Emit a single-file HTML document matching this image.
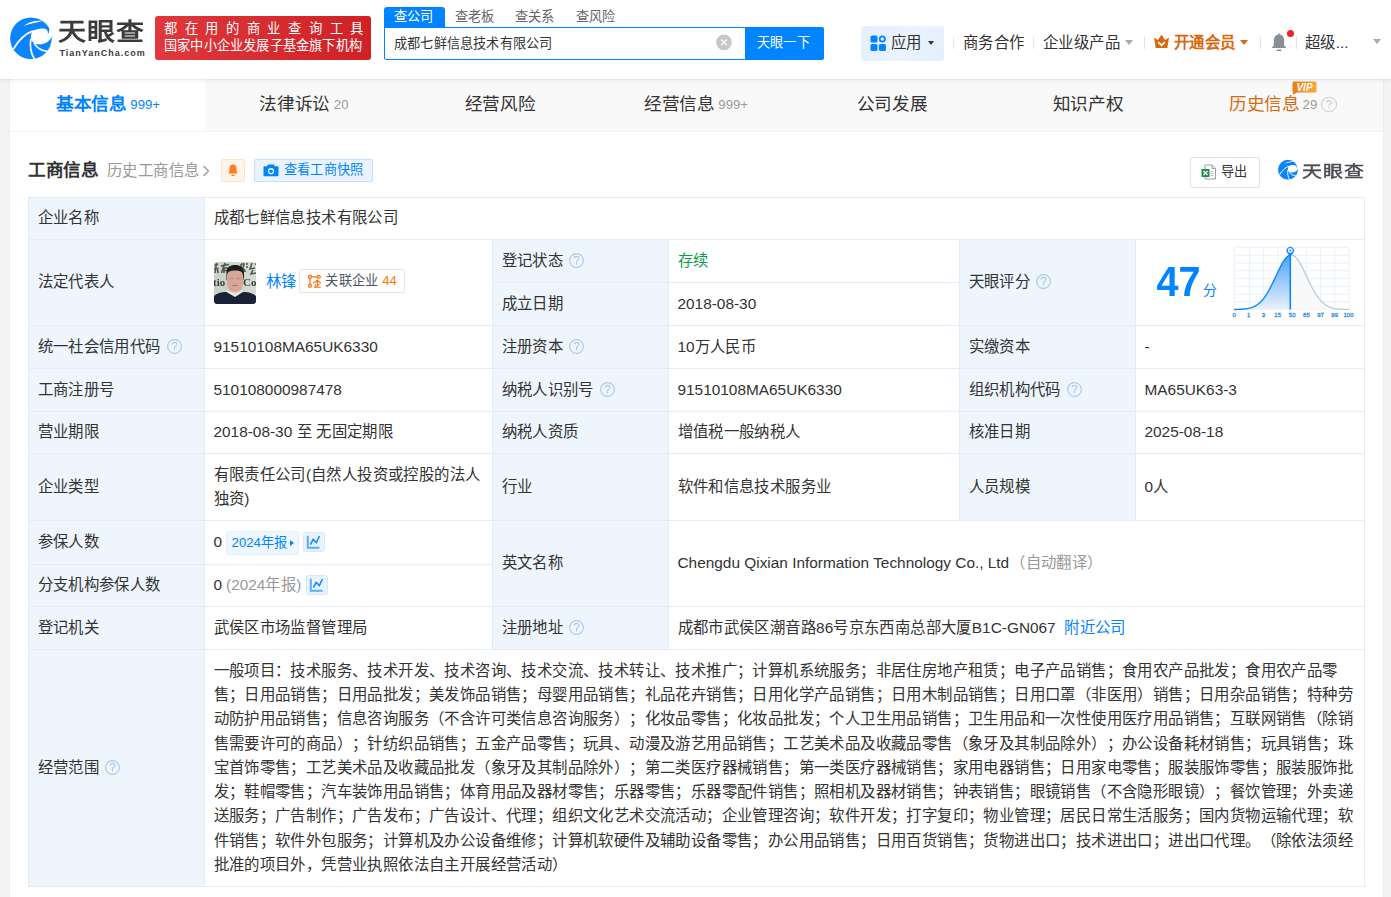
<!DOCTYPE html>
<html lang="zh-CN"><head><meta charset="utf-8">
<style>
*{box-sizing:border-box;margin:0;padding:0}
html,body{text-spacing-trim:space-all;width:1391px;height:897px;overflow:hidden;background:#f4f4f4;font-family:"Liberation Sans",sans-serif;color:#333}
.a{position:absolute}
#hdr{left:0;top:0;width:1391px;height:79px;background:#fff;box-shadow:0 1px 1px rgba(0,0,0,.04),0 2px 5px rgba(0,0,0,.05);z-index:2}
#card{left:10px;top:79px;width:1373px;height:830px;background:#fff;box-shadow:-1px 0 1px rgba(0,0,0,.03),1px 0 1px rgba(0,0,0,.03)}
#tabs{left:0;top:0;width:1373px;height:53px;background:#f9f9f9;border-bottom:1px solid #f3f3f3}
.tab{position:absolute;top:0;height:52px;width:196px;text-align:center;font-size:17.6px;line-height:50px;color:#333;white-space:nowrap}
.tab .n{font-size:13.2px;color:#999;margin-left:4px;vertical-align:1.5px}
.c{position:absolute;background:#fff;font-size:15.4px;line-height:24.2px;color:#333;white-space:nowrap;display:flex;align-items:center;padding:0 8.5px}
.l{background:#eef5fd}
.bd{position:absolute;background:#e3ecf6}
.q{display:inline-block;width:15px;height:15px;margin-left:6px;vertical-align:-2px}
.lk{color:#0084ff}
.q2{display:inline-block;width:15.5px;height:15.5px;border:1.4px solid #c3c8cf;border-radius:50%;color:#c3c8cf;font-size:11px;line-height:13px;text-align:center;vertical-align:2.5px;margin-left:4px;font-weight:normal}
.rel{display:inline-flex;align-items:center;height:23.5px;transform:translateY(1px);border:1px solid #e1e6ec;border-radius:2px;padding:0 7px 0 8px;margin-left:3px;font-size:13.2px;color:#4d5866}
.rel b{font-weight:normal;color:#ff7a00;margin-left:4px}
.relic{display:inline-block;width:13px;height:13px;margin-right:4px}
.nb{display:inline-flex;align-items:center;height:23.5px;background:#eef6ff;border:1px solid #e2eefb;border-radius:2px;padding:0 4.5px 0 5px;margin-left:3.5px;font-size:13.2px;color:#0084ff;vertical-align:middle}
.tri{display:inline-block;width:0;height:0;border-top:3px solid transparent;border-bottom:3px solid transparent;border-left:4px solid #0084ff;margin-left:2.5px}
.chi{display:inline-block;width:22px;height:20px;margin-left:4.5px;position:relative;vertical-align:middle}
.in{display:block}
#rb1 z{letter-spacing:7.7px}
#lg1 z{letter-spacing:1.4px}
#lg3 z{letter-spacing:1px}
.scope{white-space:normal;line-height:24.2px;width:1145px}
z{letter-spacing:calc(1em - round(nearest, 1em, 1px))}
</style></head><body>
<div id="hdr" class="a">
  <svg class="a" style="left:8px;top:16px" width="46" height="46" viewBox="0 0 897 897">
    <circle cx="447" cy="435" r="405" fill="#0b84fd"/>
    <path d="M480 290 C560 245 690 225 750 265 C785 295 785 340 768 375 C795 340 808 300 808 240 L900 240 L900 400 L852 400 C810 520 660 585 520 535 C480 510 450 480 445 455 C440 390 455 330 480 290 Z" fill="#fff"/>
    
    <path d="M305 192 C400 115 550 78 672 98 C550 128 420 158 305 192 Z" fill="#fff"/>
    <path d="M105 645 C200 480 330 350 485 290" stroke="#fff" stroke-width="32" fill="none"/>
    <path d="M445 450 C420 600 450 730 515 840" stroke="#fff" stroke-width="32" fill="none"/>
    <path d="M505 525 C560 620 650 680 770 690" stroke="#fff" stroke-width="32" fill="none"/>
  </svg>
  <div class="a" id="lg1" style="left:57.5px;top:17.5px;font-size:28px;line-height:34px;font-weight:bold;color:#3c3a3a;letter-spacing:1.5px;transform:scaleY(0.84);transform-origin:0 0"><z>天眼查</z></div>
  <div class="a" id="lg2" style="left:59.5px;top:47px;font-size:9px;line-height:12px;font-weight:bold;color:#3c3a3a;letter-spacing:1px">TianYanCha.com</div>
  <div class="a" style="left:155px;top:16px;width:216px;height:44px;border-radius:3px;background:linear-gradient(90deg,#e0383c,#cf2126)"></div>
  <div class="a" id="rb1" style="left:164px;top:19.5px;font-size:13.3px;line-height:18px;color:#fff;letter-spacing:7.7px"><z>都在用的商业查询工具</z></div>
  <div class="a" id="rb2" style="left:164px;top:37px;font-size:13.2px;line-height:18px;color:#fff"><z>国家中小企业发展子基金旗下机构</z></div>
  <!-- search tabs -->
  <div class="a" style="left:384px;top:7px;width:61px;height:21px;background:#0084ff;border-radius:3px 3px 0 0"></div>
  <div class="a" style="left:394px;top:7px;font-size:13.2px;line-height:20px;color:#fff"><z>查公司</z></div>
  <div class="a" style="left:455px;top:7px;font-size:13.2px;line-height:20px;color:#666"><z>查老板</z></div>
  <div class="a" style="left:515px;top:7px;font-size:13.2px;line-height:20px;color:#666"><z>查关系</z></div>
  <div class="a" style="left:576px;top:7px;font-size:13.2px;line-height:20px;color:#666"><z>查风险</z></div>
  <div class="a" style="left:384px;top:27px;width:440px;height:33px;border:1.25px solid #0084ff;border-radius:0 2px 2px 2px"></div>
  <div class="a" style="left:394px;top:34px;font-size:13.2px;line-height:20px;color:#333"><z>成都七鲜信息技术有限公司</z></div>
  <svg class="a" style="left:715px;top:34px" width="18" height="17" viewBox="0 0 18 17">
    <circle cx="9" cy="8.3" r="7.9" fill="#c8c8c8"/>
    <path d="M6.2 5.5 L11.8 11.1 M11.8 5.5 L6.2 11.1" stroke="#fff" stroke-width="1.3"/>
  </svg>
  <div class="a" style="left:745px;top:27px;width:79px;height:33px;background:#0084ff;border-radius:0 3px 3px 0"></div>
  <div class="a" style="left:757px;top:33px;font-size:13.2px;line-height:20px;color:#fff"><z>天眼一下</z></div>
  <!-- right nav -->
  <div class="a" style="left:861px;top:26px;width:83px;height:35px;background:linear-gradient(120deg,#e5f0fd,#eaf3fe 60%,#e3eefc);border-radius:3px"></div>
  <svg class="a" style="left:870px;top:35px" width="17" height="17" viewBox="0 0 17 17">
    <rect x="0.5" y="0.5" width="7" height="7" rx="1.6" fill="#0084ff"/>
    <circle cx="12.3" cy="4" r="2.6" fill="none" stroke="#0084ff" stroke-width="1.8"/>
    <rect x="0.5" y="9" width="7" height="7" rx="1.6" fill="#0084ff"/>
    <rect x="8.9" y="9" width="7" height="7" rx="1.6" fill="#0084ff"/>
  </svg>
  <div class="a" style="left:891px;top:31px;font-size:15.4px;line-height:24px;color:#333"><z>应用</z></div>
  <div class="a" style="left:927.5px;top:40.5px;width:0;height:0;border-left:3.5px solid transparent;border-right:3.5px solid transparent;border-top:4.5px solid #333"></div>
  <div class="a" style="left:953px;top:37px;width:1px;height:12px;background:#e3e3e3"></div>
  <div class="a" style="left:963px;top:31px;font-size:15.4px;line-height:24px;color:#333"><z>商务合作</z></div>
  <div class="a" style="left:1033px;top:37px;width:1px;height:12px;background:#e3e3e3"></div>
  <div class="a" style="left:1043px;top:31px;font-size:15.4px;line-height:24px;color:#333"><z>企业级产品</z></div>
  <div class="a" style="left:1125px;top:40px;width:0;height:0;border-left:4px solid transparent;border-right:4px solid transparent;border-top:5px solid #aaa"></div>
  <div class="a" style="left:1144px;top:37px;width:1px;height:12px;background:#e3e3e3"></div>
  <svg class="a" style="left:1153px;top:34px" width="17" height="15" viewBox="0 0 17 15">
    <path d="M1 3.5 L4.8 6 L8.5 0.8 L12.2 6 L16 3.5 L14.3 14 L2.7 14 Z" fill="#d9690f"/>
    <path d="M5.2 8.2 L8.5 11.3 L11.8 8.2" stroke="#fff" stroke-width="1.8" fill="none"/>
  </svg>
  <div class="a" style="left:1174px;top:31px;font-size:15.4px;line-height:24px;color:#d9690f;font-weight:bold"><z>开通会员</z></div>
  <div class="a" style="left:1240px;top:40px;width:0;height:0;border-left:4px solid transparent;border-right:4px solid transparent;border-top:5px solid #d9690f"></div>
  <div class="a" style="left:1260px;top:37px;width:1px;height:12px;background:#e3e3e3"></div>
  <svg class="a" style="left:1270px;top:33px" width="18" height="19" viewBox="0 0 18 19">
    <path d="M9 1.5 C5 1.5 3.8 5 3.8 8 L3.8 12.5 L1.5 15 L16.5 15 L14.2 12.5 L14.2 8 C14.2 5 13 1.5 9 1.5 Z" fill="#8a8e95"/>
    <rect x="6.5" y="16.6" width="5" height="1.4" rx="0.7" fill="#8a8e95"/><rect x="8.2" y="0.3" width="1.6" height="2" rx="0.8" fill="#8a8e95"/>
  </svg>
  <div class="a" style="left:1287px;top:30px;width:7px;height:7px;border-radius:50%;background:#f5222d"></div>
  <div class="a" style="left:1296px;top:37px;width:1px;height:12px;background:#e3e3e3"></div>
  <div class="a" style="left:1305px;top:31px;font-size:15.4px;line-height:24px;color:#333"><z>超级</z>...</div>
  <div class="a" style="left:1373px;top:39px;width:0;height:0;border-left:4px solid transparent;border-right:4px solid transparent;border-top:5px solid #aaa"></div>
</div>
<div id="card" class="a">
  <div id="tabs" class="a">
    <div class="a" style="left:0;top:0;width:195px;height:52px;background:#fff"></div>
    <div class="tab" style="left:0;color:#0084ff;font-weight:bold"><z>基本信息</z><span class="n" style="color:#0084ff;font-weight:normal">999+</span></div>
    <div class="tab" style="left:196px"><z>法律诉讼</z><span class="n">20</span></div>
    <div class="tab" style="left:392px"><z>经营风险</z></div>
    <div class="tab" style="left:588px"><z>经营信息</z><span class="n">999+</span></div>
    <div class="tab" style="left:784px"><z>公司发展</z></div>
    <div class="tab" style="left:980px"><z>知识产权</z></div>
    <div class="tab" style="left:1175px;color:#d9690f"><z>历史信息</z><span class="n" style="margin-left:3px">29</span><span class="q2">?</span></div>
  </div>
  <svg class="a" style="left:1282px;top:2px" width="25" height="14" viewBox="0 0 25 14">
    <defs><linearGradient id="vg" x1="0" y1="0" x2="1" y2="0"><stop offset="0" stop-color="#ee7f12"/><stop offset="1" stop-color="#fca83a"/></linearGradient></defs>
    <path d="M2 0.5 L23 0.5 Q24.5 0.5 24.5 2 L24.5 10 Q24.5 11.5 23 11.5 L5 11.5 L1 13.8 L1 11 Q0.5 10.5 0.5 10 L0.5 2 Q0.5 0.5 2 0.5 Z" fill="url(#vg)"/>
    <text x="12.5" y="9.6" text-anchor="middle" font-family="Liberation Sans" font-size="10" font-weight="bold" font-style="italic" fill="#fff">VIP</text>
  </svg>
  <!-- section header -->
  <div class="a" id="sh1" style="left:18px;top:79px;font-size:17.6px;line-height:24px;font-weight:bold;color:#333"><z>工商信息</z></div>
  <div class="a" id="sh2" style="left:97px;top:81px;font-size:15.4px;line-height:22px;color:#999"><z>历史工商信息</z></div>
  <svg class="a" style="left:191px;top:85px" width="10" height="14" viewBox="0 0 10 14"><path d="M2.5 2 L7.5 7 L2.5 12" stroke="#999" stroke-width="1.3" fill="none"/></svg>
  <div class="a" style="left:211px;top:79.5px;width:24px;height:23px;background:#fff4ea;border:1px solid #fde3cc;border-radius:2px"></div>
  <svg class="a" style="left:216px;top:84px" width="14" height="14" viewBox="0 0 14 14">
    <path d="M7 1.5 C4.3 1.5 3.4 3.8 3.4 6 L3.4 9 L2 10.6 L12 10.6 L10.6 9 L10.6 6 C10.6 3.8 9.7 1.5 7 1.5 Z" fill="#ff7e1f"/>
    <rect x="5.4" y="11.4" width="3.2" height="1.5" rx="0.7" fill="#ff7e1f"/>
  </svg>
  <div class="a" style="left:244px;top:79.5px;width:119px;height:23px;background:#ebf4fe;border:1px solid #c8dff8;border-radius:2px"></div>
  <svg class="a" style="left:253px;top:84px" width="16" height="14" viewBox="0 0 16 14">
    <path d="M5.2 1.5 L10.8 1.5 L12 3.3 L14.2 3.3 C15 3.3 15.5 3.8 15.5 4.6 L15.5 12 C15.5 12.8 15 13.3 14.2 13.3 L1.8 13.3 C1 13.3 0.5 12.8 0.5 12 L0.5 4.6 C0.5 3.8 1 3.3 1.8 3.3 L4 3.3 Z" fill="#0084ff"/>
    <circle cx="8" cy="8.2" r="3.1" fill="#ebf4fe"/><circle cx="8" cy="8.2" r="1.8" fill="#0084ff"/>
  </svg>
  <div class="a" id="sh3" style="left:274px;top:81px;font-size:13.2px;line-height:20px;color:#0084ff"><z>查看工商快照</z></div>
  <!-- export -->
  <div class="a" style="left:1179.5px;top:78px;width:70px;height:30.5px;background:#fff;border:1px solid #e3e3e3;border-radius:2px"></div>
  <svg class="a" style="left:1191px;top:85px" width="16" height="16" viewBox="0 0 16 16">
    <path d="M4 1 L11 1 L14.5 4.5 L14.5 15 L4 15 Z" fill="#fff" stroke="#9aa0a6" stroke-width="1"/>
    <path d="M11 1 L11 4.5 L14.5 4.5" fill="none" stroke="#9aa0a6" stroke-width="1"/>
    <rect x="9.5" y="7" width="3" height="1" fill="#b8bcc2"/><rect x="9.5" y="9" width="3" height="1" fill="#b8bcc2"/><rect x="9.5" y="11" width="3" height="1" fill="#b8bcc2"/>
    <rect x="0.5" y="5" width="8" height="8" fill="#1d8f4a"/>
    <path d="M2.5 7 L6.5 11 M6.5 7 L2.5 11" stroke="#fff" stroke-width="1.2"/>
  </svg>
  <div class="a" id="sh4" style="left:1211px;top:82.5px;font-size:13.2px;line-height:20px;color:#333"><z>导出</z></div>
  <svg class="a" id="lgs" style="left:1267px;top:80px" width="22" height="22" viewBox="0 0 897 897">
    <circle cx="447" cy="435" r="405" fill="#0b84fd"/>
    <path d="M480 290 C560 245 690 225 750 265 C785 295 785 340 768 375 C795 340 808 300 808 240 L900 240 L900 400 L852 400 C810 520 660 585 520 535 C480 510 450 480 445 455 C440 390 455 330 480 290 Z" fill="#fff"/>
    
    <path d="M305 192 C400 115 550 78 672 98 C550 128 420 158 305 192 Z" fill="#fff"/>
    <path d="M105 645 C200 480 330 350 485 290" stroke="#fff" stroke-width="40" fill="none"/>
    <path d="M445 450 C420 600 450 730 515 840" stroke="#fff" stroke-width="40" fill="none"/>
    <path d="M505 525 C560 620 650 680 770 690" stroke="#fff" stroke-width="40" fill="none"/>
  </svg>
  <div class="a" id="lg3" style="left:1292px;top:82.5px;font-size:20px;line-height:24px;font-weight:normal;-webkit-text-stroke:0.6px #4b4b52;color:#4b4b52;letter-spacing:1px;transform:scaleY(0.78);transform-origin:0 0"><z>天眼查</z></div>
</div>
<div id="tbl">
<div class="bd" style="left:28px;top:197px;width:1337px;height:1px"></div>
<div class="bd" style="left:28px;top:239px;width:1337px;height:1px"></div>
<div class="bd" style="left:28px;top:282px;width:1337px;height:1px"></div>
<div class="bd" style="left:28px;top:325px;width:1337px;height:1px"></div>
<div class="bd" style="left:28px;top:368px;width:1337px;height:1px"></div>
<div class="bd" style="left:28px;top:411px;width:1337px;height:1px"></div>
<div class="bd" style="left:28px;top:453px;width:1337px;height:1px"></div>
<div class="bd" style="left:28px;top:520px;width:1337px;height:1px"></div>
<div class="bd" style="left:28px;top:564px;width:1337px;height:1px"></div>
<div class="bd" style="left:28px;top:606px;width:1337px;height:1px"></div>
<div class="bd" style="left:28px;top:649px;width:1337px;height:1px"></div>
<div class="bd" style="left:28px;top:886px;width:1337px;height:1px"></div>
<div class="bd" style="left:28px;top:197px;width:1px;height:690px"></div>
<div class="bd" style="left:1364px;top:197px;width:1px;height:690px"></div>
<div class="bd" style="left:204px;top:197px;width:1px;height:689px"></div>
<div class="bd" style="left:492px;top:239px;width:1px;height:647px"></div>
<div class="bd" style="left:668px;top:239px;width:1px;height:647px"></div>
<div class="bd" style="left:959px;top:239px;width:1px;height:281px"></div>
<div class="bd" style="left:1135px;top:239px;width:1px;height:281px"></div>
<div class="c l" style="left:29px;top:198px;width:175px;height:41px;"><span class="in"><z>企业名称</z></span></div>
<div class="c v" style="left:205px;top:198px;width:1159px;height:41px;"><span class="in"><z>成都七鲜信息技术有限公司</z></span></div>
<div class="c l" style="left:29px;top:240px;width:175px;height:85px;"><span class="in"><z>法定代表人</z></span></div>
<div class="c v" style="left:205px;top:240px;width:287px;height:85px;"><span class="in"><span id="photo" style="display:inline-block;vertical-align:middle;width:42px;height:42px"><svg width="42" height="42" viewBox="0 0 42 42" style="display:block"><defs><filter id="pbl" x="0" y="0" width="1" height="1"><feGaussianBlur stdDeviation="0.35"/></filter><clipPath id="pc"><rect width="42" height="42" rx="3"/></clipPath><linearGradient id="pg" x1="0" y1="0" x2="1" y2="0"><stop offset="0" stop-color="#c9d1c7"/><stop offset="1" stop-color="#d3ddd3"/></linearGradient></defs><g clip-path="url(#pc)"><g filter="url(#pbl)"><rect width="42" height="42" fill="url(#pg)"/><g stroke="#3f423f" stroke-width="1.6" fill="none" opacity="0.85"><path d="M0.5 3 L4 2.5 M2.5 1 L1 11 M0 7 L4.5 6.5 M3.5 7 L4 11"/><path d="M7 4 L15 2.5 M11 1 L7.5 11 M10 6 L14 6 L14 11 M10 6 L10 11 M10 8.5 L14 8.5"/><path d="M27 2 L27 12 M27 2 L30 2 L29 6 L31 9 L28 10 M32 2 L34 2 M32 5 L34 5"/><path d="M38 1 L36 7 L41 6 M39 8 L37 12 L42 11 M41 1 L42 3"/></g><text x="-1" y="24" font-family="Liberation Serif" font-size="11" font-weight="bold" fill="#3a3d3a">tio</text><text x="29" y="24" font-family="Liberation Serif" font-size="11" font-weight="bold" fill="#3a3d3a">Co</text><path d="M12.5 13 C12 5 16 3 21 3 C26 3 30.5 5 30 13 L29.5 18 L12.5 18 Z" fill="#1b1a1c"/><path d="M13 14 C13 9 17 8.5 21 8.5 C25.5 8.5 29 9 29 14 L29 22 C29 27 25.5 30 21 30 C16.5 30 13 27 13 22 Z" fill="#d9a797"/><ellipse cx="17.3" cy="16.6" rx="2.8" ry="1" fill="#a8948c" opacity="0.7"/><ellipse cx="24.7" cy="16.6" rx="2.8" ry="1" fill="#a8948c" opacity="0.7"/><path d="M18.5 23.5 L23.5 23.5" stroke="#b0736a" stroke-width="1.1"/><path d="M12 28 L21 32 L29 28 L29 33 L21 35 L12 33 Z" fill="#ede9e1"/><path d="M0 34 C3 31 9 29.5 12.5 30 L21 35 L29 30 C33 29.5 39 31 42 34 L42 42 L0 42 Z" fill="#1e2235"/></g></g></svg></span><span class="lk" style="margin-left:10px"><z>林锋</z></span><span class="rel"><i class="relic"><svg width="13" height="13" viewBox="0 0 13 13" style="display:block"><g fill="none" stroke="#ff6a00" stroke-width="1.15"><rect x="0.6" y="0.6" width="2.6" height="2.6" rx="0.5"/><rect x="9.5" y="0.6" width="2.6" height="2.6" rx="0.5"/><rect x="0.6" y="9.5" width="2.6" height="2.6" rx="0.5"/><path d="M3.2 1.9 L9.5 1.9 M1.9 3.2 L1.9 9.5"/><path d="M5.2 8.3 L9.3 5.3 L12.9 8.3 M9.3 6.3 L9.3 12.2 M7.2 9.2 L7.2 12.2 M9.3 9.6 L11.3 9.6 M5.8 12.2 L12.8 12.2"/></g></svg></i><z>关联企业</z> <b>44</b></span></span></div>
<div class="c l" style="left:493px;top:240px;width:175px;height:42px;"><span class="in"><z>登记状态</z><svg class="q" width="15" height="15" viewBox="0 0 15 15"><circle cx="7.5" cy="7.5" r="6.9" fill="none" stroke="#aecbea" stroke-width="1.2"/><path d="M5.2 5.6 C5.2 4.1 6.2 3.4 7.5 3.4 C8.9 3.4 9.9 4.2 9.9 5.5 C9.9 6.9 8.5 7.3 7.9 7.9 C7.6 8.2 7.5 8.6 7.5 9.2 L7.5 11.6" fill="none" stroke="#aecbea" stroke-width="1.1"/></svg></span></div>
<div class="c v" style="left:669px;top:240px;width:290px;height:42px;"><span class="in"><span style="color:#0e9b48"><z>存续</z></span></span></div>
<div class="c l" style="left:493px;top:283px;width:175px;height:42px;"><span class="in"><z>成立日期</z></span></div>
<div class="c v" style="left:669px;top:283px;width:290px;height:42px;"><span class="in">2018-08-30</span></div>
<div class="c l" style="left:960px;top:240px;width:175px;height:85px;"><span class="in"><z>天眼评分</z><svg class="q" width="15" height="15" viewBox="0 0 15 15"><circle cx="7.5" cy="7.5" r="6.9" fill="none" stroke="#aecbea" stroke-width="1.2"/><path d="M5.2 5.6 C5.2 4.1 6.2 3.4 7.5 3.4 C8.9 3.4 9.9 4.2 9.9 5.5 C9.9 6.9 8.5 7.3 7.9 7.9 C7.6 8.2 7.5 8.6 7.5 9.2 L7.5 11.6" fill="none" stroke="#aecbea" stroke-width="1.1"/></svg></span></div>
<div class="c v" style="left:1136px;top:240px;width:228px;height:85px;"><span class="in"><span style="display:inline-block;position:relative;width:228px;height:85px;vertical-align:middle;margin-left:-8.5px">
<span class="a" id="sc47" style="left:20.5px;top:17.5px;font-size:39.6px;line-height:46px;font-weight:bold;color:#0084ff;transform:scaleY(1.075);transform-origin:0 28px">47</span>
<span class="a" id="scf" style="left:66.5px;top:39px;font-size:14px;line-height:22px;color:#0084ff"><z>分</z></span>
<svg class="a" style="left:94px;top:3px" width="130" height="77" viewBox="0 0 1391 824">
<defs><linearGradient id="sg" x1="0" y1="0" x2="0" y2="1"><stop offset="0" stop-color="#4ea3f8"/><stop offset="1" stop-color="#e9f3fe"/></linearGradient></defs>
<rect x="45" y="45" width="1230" height="667" fill="#fff"/>
<g stroke="#e9f1f9" stroke-width="11" fill="none"><path d="M45 45 L45 712"/><path d="M208 45 L208 712"/><path d="M360 45 L360 712"/><path d="M512 45 L512 712"/><path d="M665 45 L665 712"/><path d="M820 45 L820 712"/><path d="M968 45 L968 712"/><path d="M1120 45 L1120 712"/><path d="M1275 45 L1275 712"/><path d="M45 45 L1275 45"/><path d="M45 130 L1275 130"/><path d="M45 215 L1275 215"/><path d="M45 298 L1275 298"/><path d="M45 380 L1275 380"/><path d="M45 465 L1275 465"/><path d="M45 548 L1275 548"/><path d="M45 630 L1275 630"/><path d="M45 712 L1275 712"/></g>
<polygon points="645.0,129.1 649.8,128.3 660.0,128.3 670.2,130.5 680.5,134.9 690.8,141.5 701.0,150.3 711.2,161.0 721.5,173.6 731.8,187.9 742.0,203.8 752.2,221.1 762.5,239.7 772.8,259.3 783.0,279.8 793.2,300.9 803.5,322.5 813.8,344.4 824.0,366.4 834.2,388.3 844.5,410.0 854.8,431.3 865.0,452.2 875.2,472.4 885.5,491.9 895.8,510.6 906.0,528.4 916.2,545.3 926.5,561.2 936.8,576.1 947.0,590.0 957.2,602.9 967.5,614.8 977.8,625.8 988.0,635.8 998.2,644.9 1008.5,653.2 1018.8,660.6 1029.0,667.3 1039.2,673.2 1049.5,678.5 1059.8,683.2 1070.0,687.3 1080.2,690.9 1090.5,694.1 1100.8,696.8 1111.0,699.2 1121.2,701.2 1131.5,703.0 1141.8,704.5 1152.0,705.7 1162.2,706.8 1172.5,707.7 1182.8,708.5 1193.0,709.1 1203.2,709.7 1213.5,710.1 1223.8,710.5 1234.0,710.8 1244.2,711.0 1254.5,711.2 1264.8,711.4 1275.0,711.5 1275,712 645,712" fill="#f8f8f8" opacity="0.9"/>
<polygon points="45.0,711.4 55.2,711.2 65.5,711.0 75.8,710.8 86.0,710.5 96.2,710.1 106.5,709.7 116.8,709.1 127.0,708.5 137.2,707.8 147.5,706.8 157.8,705.8 168.0,704.5 178.2,703.0 188.5,701.3 198.8,699.2 209.0,696.9 219.2,694.1 229.5,691.0 239.8,687.4 250.0,683.3 260.2,678.6 270.5,673.3 280.8,667.4 291.0,660.8 301.2,653.3 311.5,645.1 321.8,636.0 332.0,626.0 342.2,615.1 352.5,603.2 362.8,590.3 373.0,576.4 383.2,561.5 393.5,545.7 403.8,528.8 414.0,511.0 424.2,492.4 434.5,472.9 444.8,452.7 455.0,431.9 465.2,410.5 475.5,388.8 485.8,366.9 496.0,344.9 506.2,323.0 516.5,301.4 526.8,280.3 537.0,259.8 547.2,240.1 557.5,221.6 567.8,204.2 578.0,188.3 588.2,173.9 598.5,161.3 608.8,150.5 619.0,141.7 629.2,135.1 639.5,130.6 645.0,129.1 645,712" fill="url(#sg)"/>
<polyline points="645.0,129.1 649.8,128.3 660.0,128.3 670.2,130.5 680.5,134.9 690.8,141.5 701.0,150.3 711.2,161.0 721.5,173.6 731.8,187.9 742.0,203.8 752.2,221.1 762.5,239.7 772.8,259.3 783.0,279.8 793.2,300.9 803.5,322.5 813.8,344.4 824.0,366.4 834.2,388.3 844.5,410.0 854.8,431.3 865.0,452.2 875.2,472.4 885.5,491.9 895.8,510.6 906.0,528.4 916.2,545.3 926.5,561.2 936.8,576.1 947.0,590.0 957.2,602.9 967.5,614.8 977.8,625.8 988.0,635.8 998.2,644.9 1008.5,653.2 1018.8,660.6 1029.0,667.3 1039.2,673.2 1049.5,678.5 1059.8,683.2 1070.0,687.3 1080.2,690.9 1090.5,694.1 1100.8,696.8 1111.0,699.2 1121.2,701.2 1131.5,703.0 1141.8,704.5 1152.0,705.7 1162.2,706.8 1172.5,707.7 1182.8,708.5 1193.0,709.1 1203.2,709.7 1213.5,710.1 1223.8,710.5 1234.0,710.8 1244.2,711.0 1254.5,711.2 1264.8,711.4 1275.0,711.5" fill="none" stroke="#b9c8d5" stroke-width="13"/>
<polyline points="45.0,711.4 55.2,711.2 65.5,711.0 75.8,710.8 86.0,710.5 96.2,710.1 106.5,709.7 116.8,709.1 127.0,708.5 137.2,707.8 147.5,706.8 157.8,705.8 168.0,704.5 178.2,703.0 188.5,701.3 198.8,699.2 209.0,696.9 219.2,694.1 229.5,691.0 239.8,687.4 250.0,683.3 260.2,678.6 270.5,673.3 280.8,667.4 291.0,660.8 301.2,653.3 311.5,645.1 321.8,636.0 332.0,626.0 342.2,615.1 352.5,603.2 362.8,590.3 373.0,576.4 383.2,561.5 393.5,545.7 403.8,528.8 414.0,511.0 424.2,492.4 434.5,472.9 444.8,452.7 455.0,431.9 465.2,410.5 475.5,388.8 485.8,366.9 496.0,344.9 506.2,323.0 516.5,301.4 526.8,280.3 537.0,259.8 547.2,240.1 557.5,221.6 567.8,204.2 578.0,188.3 588.2,173.9 598.5,161.3 608.8,150.5 619.0,141.7 629.2,135.1 639.5,130.6 645.0,129.1" fill="none" stroke="#0a84ff" stroke-width="15"/>
<path d="M645 130 L645 712" stroke="#0a84ff" stroke-width="17"/>
<path d="M645 145 L612 105 A40 40 0 1 1 678 105 Z" fill="#0a84ff"/>
<circle cx="645" cy="80" r="26" fill="#fff"/><circle cx="645" cy="80" r="11" fill="#0a84ff"/>
<g font-family="Liberation Sans" font-size="64" fill="#2f86e6" stroke="#2f86e6" stroke-width="3"><text x="45" y="788" text-anchor="middle">0</text><text x="200" y="788" text-anchor="middle">1</text><text x="358" y="788" text-anchor="middle">3</text><text x="510" y="788" text-anchor="middle">15</text><text x="665" y="788" text-anchor="middle">50</text><text x="818" y="788" text-anchor="middle">85</text><text x="968" y="788" text-anchor="middle">97</text><text x="1120" y="788" text-anchor="middle">99</text><text x="1268" y="788" text-anchor="middle">100</text></g>
</svg></span></span></div>
<div class="c l" style="left:29px;top:326px;width:175px;height:42px;"><span class="in"><z>统一社会信用代码</z><svg class="q" width="15" height="15" viewBox="0 0 15 15"><circle cx="7.5" cy="7.5" r="6.9" fill="none" stroke="#aecbea" stroke-width="1.2"/><path d="M5.2 5.6 C5.2 4.1 6.2 3.4 7.5 3.4 C8.9 3.4 9.9 4.2 9.9 5.5 C9.9 6.9 8.5 7.3 7.9 7.9 C7.6 8.2 7.5 8.6 7.5 9.2 L7.5 11.6" fill="none" stroke="#aecbea" stroke-width="1.1"/></svg></span></div>
<div class="c v" style="left:205px;top:326px;width:287px;height:42px;"><span class="in">91510108MA65UK6330</span></div>
<div class="c l" style="left:493px;top:326px;width:175px;height:42px;"><span class="in"><z>注册资本</z><svg class="q" width="15" height="15" viewBox="0 0 15 15"><circle cx="7.5" cy="7.5" r="6.9" fill="none" stroke="#aecbea" stroke-width="1.2"/><path d="M5.2 5.6 C5.2 4.1 6.2 3.4 7.5 3.4 C8.9 3.4 9.9 4.2 9.9 5.5 C9.9 6.9 8.5 7.3 7.9 7.9 C7.6 8.2 7.5 8.6 7.5 9.2 L7.5 11.6" fill="none" stroke="#aecbea" stroke-width="1.1"/></svg></span></div>
<div class="c v" style="left:669px;top:326px;width:290px;height:42px;"><span class="in">10<z>万人民币</z></span></div>
<div class="c l" style="left:960px;top:326px;width:175px;height:42px;"><span class="in"><z>实缴资本</z></span></div>
<div class="c v" style="left:1136px;top:326px;width:228px;height:42px;"><span class="in">-</span></div>
<div class="c l" style="left:29px;top:369px;width:175px;height:42px;"><span class="in"><z>工商注册号</z></span></div>
<div class="c v" style="left:205px;top:369px;width:287px;height:42px;"><span class="in">510108000987478</span></div>
<div class="c l" style="left:493px;top:369px;width:175px;height:42px;"><span class="in"><z>纳税人识别号</z><svg class="q" width="15" height="15" viewBox="0 0 15 15"><circle cx="7.5" cy="7.5" r="6.9" fill="none" stroke="#aecbea" stroke-width="1.2"/><path d="M5.2 5.6 C5.2 4.1 6.2 3.4 7.5 3.4 C8.9 3.4 9.9 4.2 9.9 5.5 C9.9 6.9 8.5 7.3 7.9 7.9 C7.6 8.2 7.5 8.6 7.5 9.2 L7.5 11.6" fill="none" stroke="#aecbea" stroke-width="1.1"/></svg></span></div>
<div class="c v" style="left:669px;top:369px;width:290px;height:42px;"><span class="in">91510108MA65UK6330</span></div>
<div class="c l" style="left:960px;top:369px;width:175px;height:42px;"><span class="in"><z>组织机构代码</z><svg class="q" width="15" height="15" viewBox="0 0 15 15"><circle cx="7.5" cy="7.5" r="6.9" fill="none" stroke="#aecbea" stroke-width="1.2"/><path d="M5.2 5.6 C5.2 4.1 6.2 3.4 7.5 3.4 C8.9 3.4 9.9 4.2 9.9 5.5 C9.9 6.9 8.5 7.3 7.9 7.9 C7.6 8.2 7.5 8.6 7.5 9.2 L7.5 11.6" fill="none" stroke="#aecbea" stroke-width="1.1"/></svg></span></div>
<div class="c v" style="left:1136px;top:369px;width:228px;height:42px;"><span class="in">MA65UK63-3</span></div>
<div class="c l" style="left:29px;top:412px;width:175px;height:41px;"><span class="in"><z>营业期限</z></span></div>
<div class="c v" style="left:205px;top:412px;width:287px;height:41px;"><span class="in">2018-08-30 <z>至</z> <z>无固定期限</z></span></div>
<div class="c l" style="left:493px;top:412px;width:175px;height:41px;"><span class="in"><z>纳税人资质</z></span></div>
<div class="c v" style="left:669px;top:412px;width:290px;height:41px;"><span class="in"><z>增值税一般纳税人</z></span></div>
<div class="c l" style="left:960px;top:412px;width:175px;height:41px;"><span class="in"><z>核准日期</z></span></div>
<div class="c v" style="left:1136px;top:412px;width:228px;height:41px;"><span class="in">2025-08-18</span></div>
<div class="c l" style="left:29px;top:454px;width:175px;height:66px;"><span class="in"><z>企业类型</z></span></div>
<div class="c v" style="left:205px;top:454px;width:287px;height:66px;"><span class="in"><span style="white-space:normal;line-height:24.2px"><z>有限责任公司</z>(<z>自然人投资或控股的法人</z><br><z>独资</z>)</span></span></div>
<div class="c l" style="left:493px;top:454px;width:175px;height:66px;"><span class="in"><z>行业</z></span></div>
<div class="c v" style="left:669px;top:454px;width:290px;height:66px;"><span class="in"><z>软件和信息技术服务业</z></span></div>
<div class="c l" style="left:960px;top:454px;width:175px;height:66px;"><span class="in"><z>人员规模</z></span></div>
<div class="c v" style="left:1136px;top:454px;width:228px;height:66px;"><span class="in">0<z>人</z></span></div>
<div class="c l" style="left:29px;top:521px;width:175px;height:43px;"><span class="in"><z>参保人数</z></span></div>
<div class="c v" style="left:205px;top:521px;width:287px;height:43px;"><span class="in">0<span class="nb">2024<z>年报</z><i class="tri"></i></span><span class="chi"><svg width="22" height="20" viewBox="0 0 22 20" style="position:absolute;left:-1px;top:-1px"><rect x="0.5" y="0.5" width="21" height="19" rx="2" fill="#e8f3fe" stroke="#d6e8fb"/><path d="M4.8 3.8 L4.8 15.8 L16.5 15.8" stroke="#5aabf9" stroke-width="2" fill="none"/><path d="M7.4 12.5 L10.2 7.4 L13.3 10.6 L16.5 4" stroke="#1a8cff" stroke-width="1.6" fill="none"/></svg></span></span></div>
<div class="c l" style="left:29px;top:565px;width:175px;height:41px;"><span class="in"><z>分支机构参保人数</z></span></div>
<div class="c v" style="left:205px;top:565px;width:287px;height:41px;"><span class="in">0<span style="color:#999;margin-left:4px">(2024<z>年报</z>)</span><span class="chi" style="margin-left:6px"><svg width="22" height="20" viewBox="0 0 22 20" style="position:absolute;left:-1px;top:-1px"><rect x="0.5" y="0.5" width="21" height="19" rx="2" fill="#e8f3fe" stroke="#d6e8fb"/><path d="M4.8 3.8 L4.8 15.8 L16.5 15.8" stroke="#5aabf9" stroke-width="2" fill="none"/><path d="M7.4 12.5 L10.2 7.4 L13.3 10.6 L16.5 4" stroke="#1a8cff" stroke-width="1.6" fill="none"/></svg></span></span></div>
<div class="c l" style="left:493px;top:521px;width:175px;height:85px;"><span class="in"><z>英文名称</z></span></div>
<div class="c v" style="left:669px;top:521px;width:695px;height:85px;"><span class="in">Chengdu Qixian Information Technology Co., Ltd<span style="color:#999;margin-left:1px"><z>（自动翻译）</z></span></span></div>
<div class="c l" style="left:29px;top:607px;width:175px;height:42px;"><span class="in"><z>登记机关</z></span></div>
<div class="c v" style="left:205px;top:607px;width:287px;height:42px;"><span class="in"><z>武侯区市场监督管理局</z></span></div>
<div class="c l" style="left:493px;top:607px;width:175px;height:42px;"><span class="in"><z>注册地址</z><svg class="q" width="15" height="15" viewBox="0 0 15 15"><circle cx="7.5" cy="7.5" r="6.9" fill="none" stroke="#aecbea" stroke-width="1.2"/><path d="M5.2 5.6 C5.2 4.1 6.2 3.4 7.5 3.4 C8.9 3.4 9.9 4.2 9.9 5.5 C9.9 6.9 8.5 7.3 7.9 7.9 C7.6 8.2 7.5 8.6 7.5 9.2 L7.5 11.6" fill="none" stroke="#aecbea" stroke-width="1.1"/></svg></span></div>
<div class="c v" style="left:669px;top:607px;width:695px;height:42px;"><span class="in"><z>成都市武侯区潮音路</z>86<z>号京东西南总部大厦</z>B1C-GN067<span class="lk" style="margin-left:8.5px"><z>附近公司</z></span></span></div>
<div class="c l" style="left:29px;top:650px;width:175px;height:236px;"><span class="in"><z>经营范围</z><svg class="q" width="15" height="15" viewBox="0 0 15 15"><circle cx="7.5" cy="7.5" r="6.9" fill="none" stroke="#aecbea" stroke-width="1.2"/><path d="M5.2 5.6 C5.2 4.1 6.2 3.4 7.5 3.4 C8.9 3.4 9.9 4.2 9.9 5.5 C9.9 6.9 8.5 7.3 7.9 7.9 C7.6 8.2 7.5 8.6 7.5 9.2 L7.5 11.6" fill="none" stroke="#aecbea" stroke-width="1.1"/></svg></span></div>
<div class="c v" style="left:205px;top:650px;width:1159px;height:236px;"><span class="in"><div class="scope"><z>一般项目：技术服务、技术开发、技术咨询、技术交流、技术转让、技术推广；计算机系统服务；非居住房地产租赁；电子产品销售；食用农产品批发；食用农产品零售；日用品销售；日用品批发；美发饰品销售；母婴用品销售；礼品花卉销售；日用化学产品销售；日用木制品销售；日用口罩（非医用）销售；日用杂品销售；特种劳动防护用品销售；信息咨询服务（不含许可类信息咨询服务）；化妆品零售；化妆品批发；个人卫生用品销售；卫生用品和一次性使用医疗用品销售；互联网销售（除销售需要许可的商品）；针纺织品销售；五金产品零售；玩具、动漫及游艺用品销售；工艺美术品及收藏品零售（象牙及其制品除外）；办公设备耗材销售；玩具销售；珠宝首饰零售；工艺美术品及收藏品批发（象牙及其制品除外）；第二类医疗器械销售；第一类医疗器械销售；家用电器销售；日用家电零售；服装服饰零售；服装服饰批发；鞋帽零售；汽车装饰用品销售；体育用品及器材零售；乐器零售；乐器零配件销售；照相机及器材销售；钟表销售；眼镜销售（不含隐形眼镜）；餐饮管理；外卖递送服务；广告制作；广告发布；广告设计、代理；组织文化艺术交流活动；企业管理咨询；软件开发；打字复印；物业管理；居民日常生活服务；国内货物运输代理；软件销售；软件外包服务；计算机及办公设备维修；计算机软硬件及辅助设备零售；办公用品销售；日用百货销售；货物进出口；技术进出口；进出口代理。（除依法须经批准的项目外，凭营业执照依法自主开展经营活动）</z></div></span></div>
</div>
</body></html>
